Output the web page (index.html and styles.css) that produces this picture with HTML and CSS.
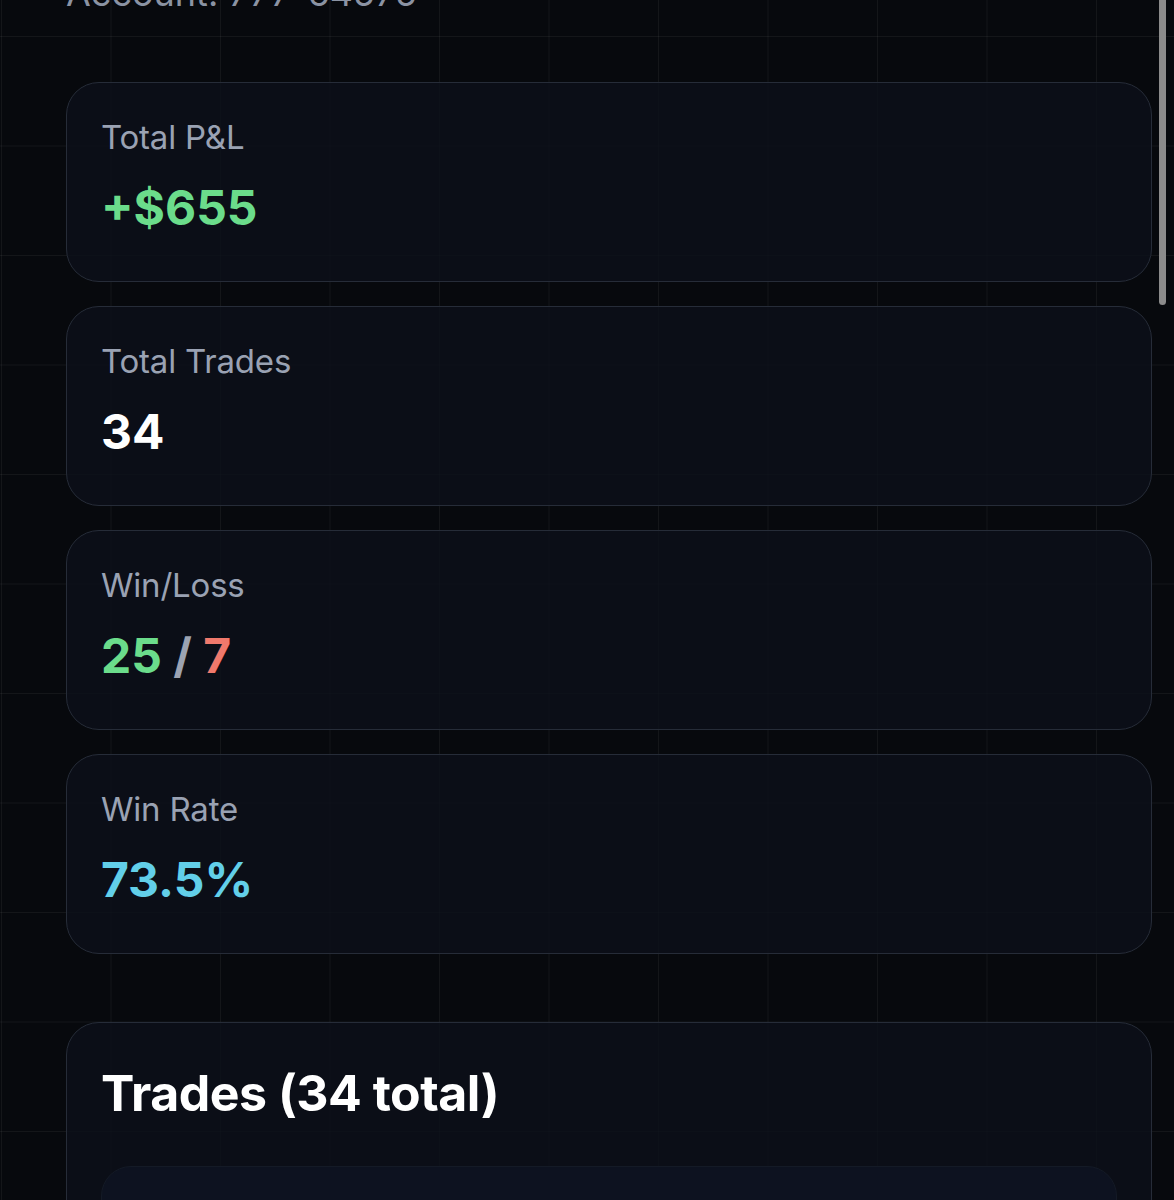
FILE: index.html
```html
<!DOCTYPE html>
<html lang="en">

<head>
        <meta charset="UTF-8">
        <meta name="viewport" content="width=device-width, initial-scale=1.0">
        <title>Trading Account</title>
        <link rel="stylesheet" href="styles.css">
</head>

<body>
        <div class="page">
                <p class="account">Account: 777-64575</p>

                <section class="stats">
                        <div class="stat_card">
                                <div class="stat_label">Total P&amp;L</div>
                                <div class="stat_value green">+$655</div>
                        </div>
                        <div class="stat_card">
                                <div class="stat_label">Total Trades</div>
                                <div class="stat_value">34</div>
                        </div>
                        <div class="stat_card">
                                <div class="stat_label">Win/Loss</div>
                                <div class="stat_value"><span class="green">25</span> <span class="muted">/</span> <span class="red">7</span></div>
                        </div>
                        <div class="stat_card">
                                <div class="stat_label">Win Rate</div>
                                <div class="stat_value cyan">73.5%</div>
                        </div>
                </section>

                <section class="trades_card">
                        <h2 class="trades_title">Trades (34 total)</h2>
                        <div class="trade_row"></div>
                </section>
        </div>

        <div class="scroll_thumb"></div>
</body>

</html>
```

FILE: styles.css
```css
html,
body {
        margin: 0;
        padding: 0;
        height: 100%;
        overflow: hidden;
}

body {
        background-color: #07090d;
        background-image:
                linear-gradient(to right, rgba(255, 255, 255, 0.05) 1px, transparent 1px),
                linear-gradient(to bottom, rgba(255, 255, 255, 0.05) 1px, transparent 1px);
        background-size: 109.5px 109.5px;
        background-position: 1px 36px;
        font-family: Inter, "Noto Sans", sans-serif;
        color: #ffffff;
}

.page {
        padding: 0 22px 0 66px;
}

.account {
        margin: -29px 0 67px;
        font-size: 36px;
        line-height: 44px;
        color: #8b93a3;
}

.stats {
        display: flex;
        flex-direction: column;
        gap: 24px;
}

.stat_card {
        height: 200px;
        box-sizing: border-box;
        padding: 34px 34px 0;
        border: 1.5px solid #262c38;
        border-radius: 33px;
        background-color: rgba(12, 16, 26, 0.82);
}

.stat_label {
        font-size: 33px;
        line-height: 40px;
        color: #9aa2b3;
        letter-spacing: -0.2px;
}

.stat_value {
        margin-top: 22px;
        font-size: 48px;
        line-height: 58px;
        font-weight: 700;
        color: #ffffff;
}

.green {
        color: #6bdc8b;
}

.red {
        color: #f0796c;
}

.cyan {
        color: #62cfe9;
}

.muted {
        color: #9ca3b2;
}

.trades_card {
        margin-top: 68px;
        padding: 40px 34px 0;
        height: 400px;
        border: 1.5px solid #262c38;
        border-radius: 33px;
        background-color: rgba(12, 16, 26, 0.82);
}

.trades_title {
        margin: 0;
        font-size: 50px;
        line-height: 60px;
        font-weight: 700;
        letter-spacing: -0.5px;
}

.trade_row {
        margin-top: 43px;
        height: 200px;
        border: 1px solid #141a26;
        border-radius: 30px;
        background-color: #0d1220;
}

.scroll_thumb {
        position: fixed;
        top: -6px;
        right: 8px;
        width: 7px;
        height: 311px;
        border-radius: 4px;
        background-color: #8b8b8b;
}
```
